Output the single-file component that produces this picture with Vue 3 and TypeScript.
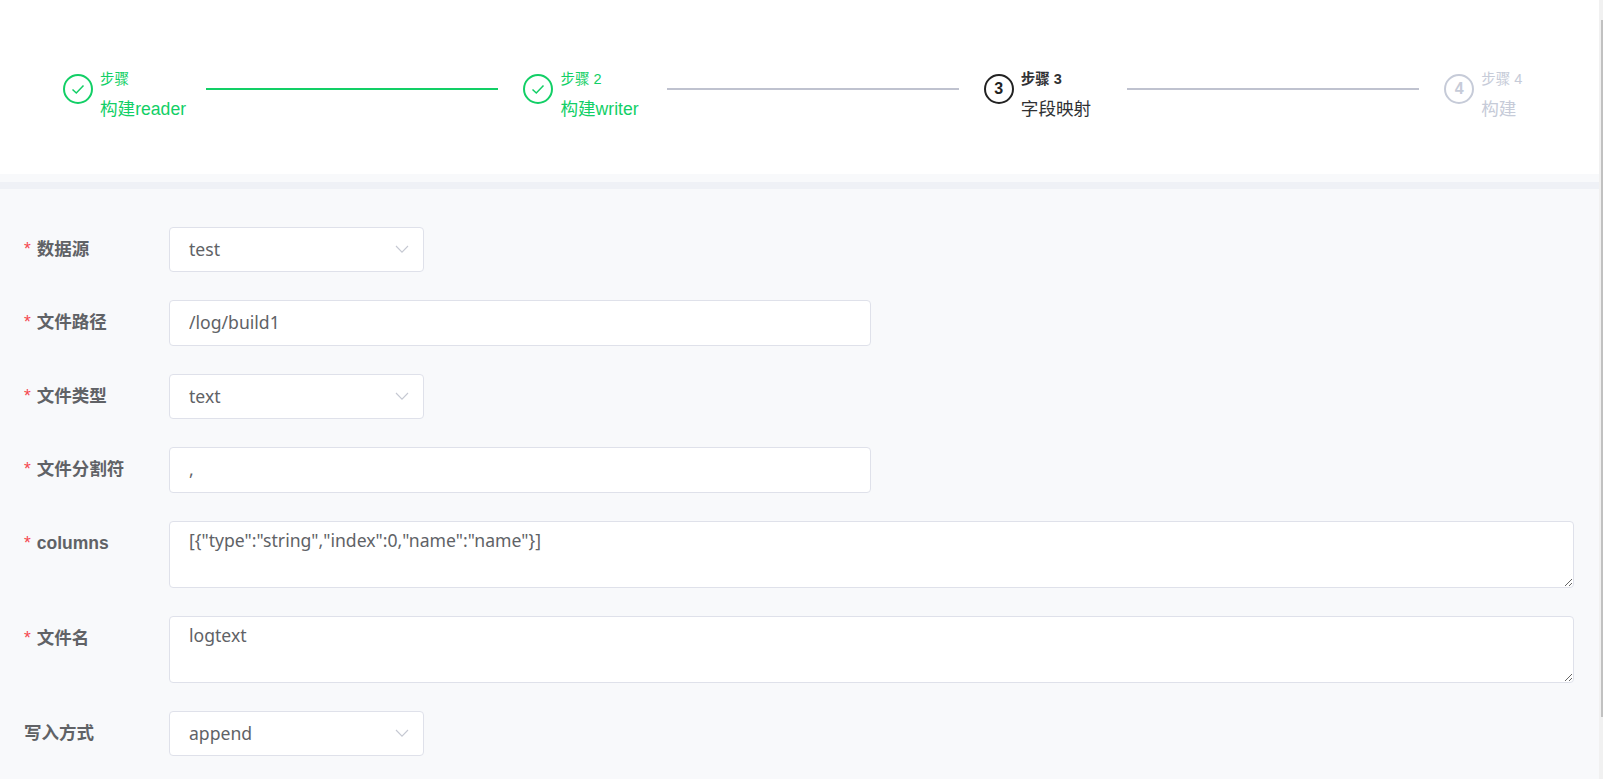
<script setup lang="ts">
interface Step { title: string; desc: string; state: 'done' | 'active' | 'wait'; num: number; lineOn: boolean }
interface Field { kind: 'select' | 'input' | 'textarea'; label: string; value: string; required: boolean }

const steps: Step[] = [
  { title: '步骤', desc: '构建reader', state: 'done', num: 1, lineOn: true },
  { title: '步骤 2', desc: '构建writer', state: 'done', num: 2, lineOn: false },
  { title: '步骤 3', desc: '字段映射', state: 'active', num: 3, lineOn: false },
  { title: '步骤 4', desc: '构建', state: 'wait', num: 4, lineOn: false },
]

const fields: Field[] = [
  { kind: 'select', label: '数据源', value: 'test', required: true },
  { kind: 'input', label: '文件路径', value: '/log/build1', required: true },
  { kind: 'select', label: '文件类型', value: 'text', required: true },
  { kind: 'input', label: '文件分割符', value: ',', required: true },
  { kind: 'textarea', label: 'columns', value: '[{"type":"string","index":0,"name":"name"}]', required: true },
  { kind: 'textarea', label: '文件名', value: 'logtext', required: true },
  { kind: 'select', label: '写入方式', value: 'append', required: false },
]
</script>

<template>
  <div class="page">
    <main class="main">
      <section class="steps">
        <div v-for="(s, i) in steps" :key="i" class="step" :class="[s.state, { last: i === steps.length - 1 }]">
          <div class="icon">
            <svg v-if="s.state === 'done'" width="14" height="14" viewBox="0 0 14 14">
              <path d="M1.5 7.5 L5.3 11 L12.5 3.5" fill="none" stroke="currentColor" stroke-width="1.5" />
            </svg>
            <span v-else>{{ s.num }}</span>
          </div>
          <div class="text">
            <div class="title">{{ s.title }}</div>
            <div class="desc">{{ s.desc }}</div>
          </div>
          <div v-if="i < steps.length - 1" class="line" :class="{ on: s.lineOn }"></div>
        </div>
      </section>
      <div class="band"></div>
      <form class="form" @submit.prevent>
        <div v-for="f in fields" :key="f.label" class="row" :class="{ tall: f.kind === 'textarea' }">
          <label class="label"><span v-if="f.required" class="star">*</span>{{ f.label }}</label>
          <div v-if="f.kind === 'select'" class="control select">
            <span>{{ f.value }}</span>
            <svg class="chev" width="16" height="16" viewBox="0 0 16 16">
              <path d="M2 5 L8 11.2 L14 5" fill="none" stroke="#c5c8d2" stroke-width="1.1" />
            </svg>
          </div>
          <input v-else-if="f.kind === 'input'" class="control input" type="text" :value="f.value" />
          <textarea v-else class="control area" :value="f.value"></textarea>
        </div>
      </form>
    </main>
    <div class="scroll"><div class="thumb"></div></div>
  </div>
</template>

<style>
html, body { margin: 0; height: 100%; overflow: hidden; }
</style>

<style scoped>
.page {
  display: flex;
  height: 779px;
  width: 1603px;
  overflow: hidden;
  background: #f8f9fb;
  font-family: "Liberation Sans", "Noto Sans CJK SC", sans-serif;
}
.main { flex: 1; min-width: 0; }
.scroll { width: 4px; flex: none; background: #f1f1f1; display: flex; justify-content: flex-end; }
.thumb { width: 2px; height: 697px; margin-top: 20px; background: #c1c1c1; }
.steps {
  display: flex;
  height: 174px;
  box-sizing: border-box;
  padding: 68px 0 0 63px;
  background: #fff;
}
.step { position: relative; display: flex; width: 460.4px; flex: none; align-items: flex-start; }
.step.last { width: auto; }
.icon {
  box-sizing: border-box;
  width: 30px;
  height: 30px;
  margin-top: 6px;
  flex: none;
  border: 2px solid currentColor;
  border-radius: 50%;
  display: flex;
  align-items: center;
  justify-content: center;
  font-size: 16px;
  font-weight: 700;
}
.text { margin-left: 7px; flex: none; }
.title { font-size: 14.5px; line-height: 20px; margin-top: 1px; }
.desc { font-size: 17.6px; line-height: 26px; margin-top: 7px; }
.line { position: absolute; top: 20px; left: 143.3px; width: 292px; height: 2px; background: #bfc2cf; }
.line.on { background: #12cf66; }
.done { color: #12cf66; }
.active { color: #303133; }
.active .title { font-weight: 700; }
.active .icon { color: #222; }
.wait { color: #c6cbd8; }
.band { height: 7px; margin-top: 8px; background: #eff1f6; }
.form { padding: 37.9px 0 0 24px; display: flex; flex-direction: column; gap: 28px; width: 1574px; box-sizing: border-box; }
.row { display: flex; height: 45.5px; }
.row.tall { height: 67px; }
.label {
  width: 145px;
  flex: none;
  font-size: 17.5px;
  font-weight: 700;
  color: #606266;
  line-height: 44px;
}
.star { color: #f5474e; font-weight: 400; margin-right: 6px; }
.control {
  box-sizing: border-box;
  border: 1px solid #dfe1ea;
  border-radius: 4px;
  background: #fff;
  font-family: "Noto Sans", "Noto Sans CJK SC", sans-serif;
  font-size: 17.6px;
  color: #606266;
  padding: 0 19px 2px;
  height: 100%;
  outline: none;
}
.select {
  width: 255px;
  display: flex;
  align-items: center;
  justify-content: space-between;
  padding-right: 13px;
}
.input { width: 702px; }
.area {
  flex: 1;
  display: block;
  resize: vertical;
  padding-top: 6px;
  line-height: 24px;
}
</style>
